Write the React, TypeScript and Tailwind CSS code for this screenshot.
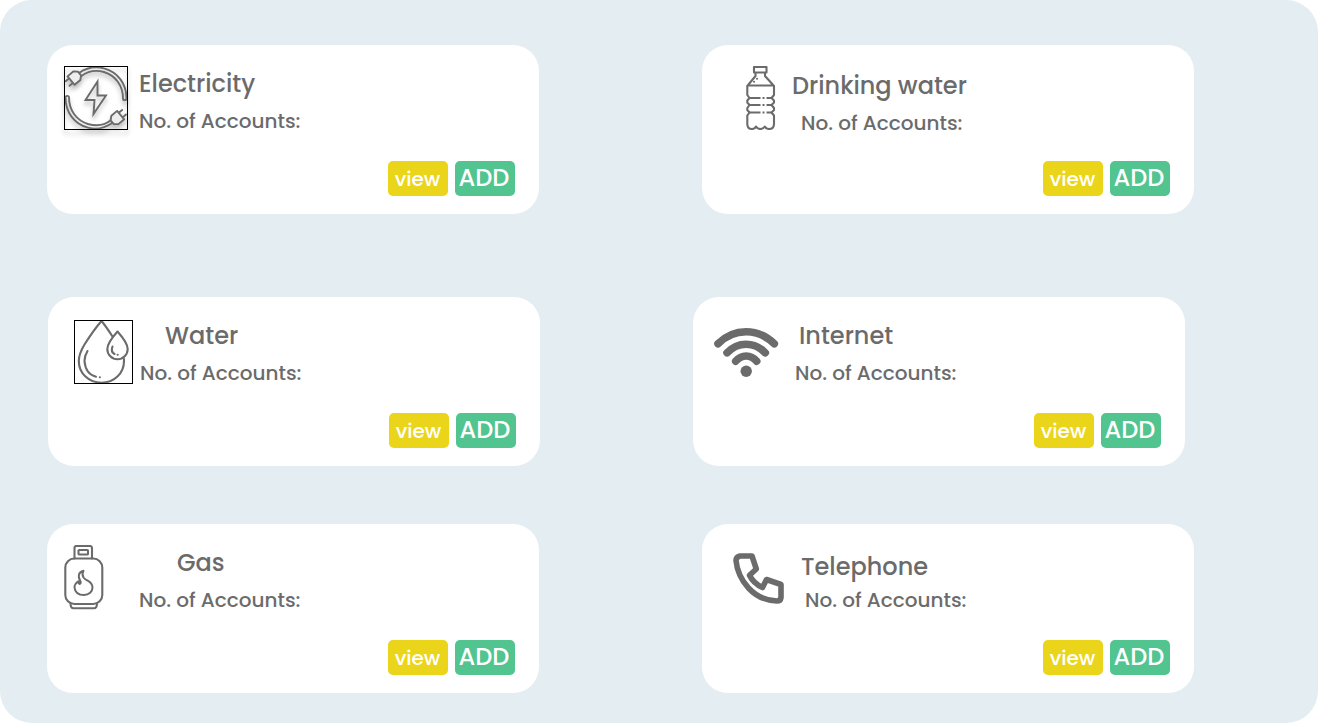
import type { ReactNode } from "react";

type Service = {
  title: string;
  icon: ReactNode;
  iconBox: string;
  text: string;
  titleClass: string;
  accountsClass: string;
};

const line = { fill: "none", stroke: "#6b6b6b", strokeLinecap: "round", strokeLinejoin: "round" } as const;

function Plug() {
  return (
    <path
      d="M-4.500 -5.500 L3 -5.500 L6.500 -2.500 V2.500 L3 5.500 L-4.500 5.500 Z M-4.500 -3 H-9 M-4.500 3 H-9"
      fill="#eeeeee"
    />
  );
}

function ElectricityIcon() {
  return (
    <svg
      viewBox="0 0 64 64"
      className="size-full outline-1 -outline-offset-1 outline-black drop-shadow-[0_4px_2px_rgba(0,0,0,0.25)]"
      {...line}
      strokeWidth="1.900"
    >
      <path d="M15 7 C22 2 31 0 40 2.300 C54 6 62.500 18 62.500 32.500 C62.500 34.700 59 34.700 59 32.500 C59 19 51 9.500 40 6 C32 3.800 24 5 17.500 10" />
      <path d="M49 56.500 C41 62 32 64 24 61.700 C10 58 1.500 46 1.500 31.500 C1.500 29.300 5 29.300 5 31.500 C5 45 13 54.500 24 58 C32 60.200 40 59.500 46.500 54.500" />
      <path d="M33.500 15.500 L21.500 34 H30.500 L29.500 48 L42 29.500 H33.500 Z" strokeLinejoin="miter" />
      <g transform="translate(10.500 11.700) rotate(-40)">
        <Plug />
      </g>
      <g transform="translate(53.200 52) rotate(140)">
        <Plug />
      </g>
    </svg>
  );
}

function BottleIcon() {
  return (
    <svg viewBox="0 0 30 64" className="size-full" {...line} strokeWidth="2.100">
      <path d="M8 1 H20.500 V6.500 H8 Z M9.500 6.500 V10 L1.300 20 V29 L3.500 32 L1.300 34.500 V36.500 L3.500 39 L1.300 42 V44 L3.500 46.500 L1.300 49.500 V58 Q1.300 63 6 63 Q9 63 10 60.500 Q11.500 63 14.300 63 Q17 63 18.800 60.500 Q20 63 23 63 Q28 63 28 58 V49.500 L25.500 46.500 L28 44 V42 L25.500 39 L28 36.500 V34.500 L25.500 32 L28 29 V20 L19 10 V6.500 M1.500 19.500 H27.500" />
      <path d="M3.500 32 H14.500 M16.500 32 H18.500 M20.500 32 H25.500 M3.500 39 H14.500 M16.500 39 H18.500 M20.500 39 H25.500 M3.500 46.500 H14.500 M16.500 46.500 H18.500 M20.500 46.500 H25.500" strokeLinecap="butt" />
      <path d="M8 15.700 H8.100 M11 12.700 H11.100" strokeWidth="2" />
    </svg>
  );
}

function WaterIcon() {
  return (
    <svg
      viewBox="0 0 59 64"
      className="size-full outline-1 -outline-offset-1 outline-black"
      {...line}
      strokeWidth="2.100"
    >
      <path d="M38.500 16.500 Q31 5 27.500 1 Q20 9.500 10.500 24.500 Q4.800 34 4.800 41 C4.800 53.500 15 62.800 27.500 62.800 C40 62.800 50 53.500 50 41 V39" />
      <path d="M43.500 11.500 Q33.300 23 33.300 29 A10.200 10.200 0 0 0 53.700 29 Q53.700 23 43.500 11.500 Z" />
      <path d="M13.500 31 Q10.500 36 10.500 41 Q11.500 54 22 56.800 M25.800 57.200 H25.900 M38.500 26.500 Q36.500 32 40.500 34 M43.600 34.700 H43.700" />
    </svg>
  );
}

function InternetIcon() {
  return (
    <svg viewBox="0 0 64 50" className="size-full overflow-visible" {...line} strokeWidth="7.600">
      <path d="M4 15.800 C20 -.200 44 -.200 60.300 15.800 M13 24.800 C24 13.300 40.300 13.300 51.300 24.800 M21.700 33.200 C27.500 26.200 36.800 26.200 42.700 33.200" />
      <circle cx="32.200" cy="43.300" r="5.700" fill="#6b6b6b" stroke="none" />
    </svg>
  );
}

function GasIcon() {
  return (
    <svg viewBox="0 0 40 65" className="size-full" {...line} strokeWidth="2.100">
      <path d="M10.500 13.500 V3 Q10.500 1 12.500 1 H26 Q28 1 28 3 V13.500" />
      <rect x="14.500" y="5" width="9.500" height="4.500" rx=".8" />
      <rect x="1.300" y="13.500" width="37" height="45.500" rx="9" />
      <path d="M6.500 58.500 Q6.500 63.200 9.500 63.200 H30 Q33 63.200 33 58.500" />
      <path d="M19.500 25.800 C14 27 14 32 16 35.200 Q17.500 38 15.800 39 Q14.500 38.500 14.300 36.300 Q10.500 39 10.500 42.500 C11 48 15 50 20 50 C25 49.800 28.500 46.500 28.500 42.500 C28.500 36 22.500 36.500 19.500 32.500 Q17.500 29 19.500 25.800 Z" strokeWidth="2" />
    </svg>
  );
}

function TelephoneIcon() {
  return (
    <svg viewBox="0 0 52 52" className="size-full" {...line} strokeWidth="5.600">
      <path d="M7 3 H19 L23.300 16 L16.500 22.300 Q20.500 30.500 29.500 34.500 L33.500 26.500 L48 31.500 V44.500 Q47.500 48 44 48 Q27 47.500 15.500 35 Q4.500 23 3 7.500 Q3 4 7 3 Z" />
    </svg>
  );
}

const rows: { className: string; services: Service[] }[] = [
  {
    className: "pl-[47px] gap-[163px]",
    services: [
      {
        title: "Electricity",
        icon: <ElectricityIcon />,
        iconBox: "ml-[17px] mt-[21px] h-16 w-16",
        text: "ml-[11px] pt-6",
        titleClass: "",
        accountsClass: "mt-[10px]",
      },
      {
        title: "Drinking water",
        icon: <BottleIcon />,
        iconBox: "ml-11 mt-[21px] h-16 w-[30px]",
        text: "ml-4 pt-[26px]",
        titleClass: "",
        accountsClass: "mt-[10px] ml-[9px]",
      },
    ],
  },
  {
    className: "mt-[83px] pl-12 gap-[153px]",
    services: [
      {
        title: "Water",
        icon: <WaterIcon />,
        iconBox: "ml-[26px] mt-[23px] h-16 w-[59px]",
        text: "ml-[7px] pt-6",
        titleClass: "ml-[25px]",
        accountsClass: "mt-[10px]",
      },
      {
        title: "Internet",
        icon: <InternetIcon />,
        iconBox: "ml-[21px] mt-[31px] h-[50px] w-16",
        text: "ml-[17px] pt-6",
        titleClass: "ml-1",
        accountsClass: "mt-[10px]",
      },
    ],
  },
  {
    className: "mt-[58px] pl-[47px] gap-[163px]",
    services: [
      {
        title: "Gas",
        icon: <GasIcon />,
        iconBox: "ml-[17px] mt-[21px] h-[65px] w-10",
        text: "ml-[35px] pt-6",
        titleClass: "ml-[38px]",
        accountsClass: "mt-[10px]",
      },
      {
        title: "Telephone",
        icon: <TelephoneIcon />,
        iconBox: "ml-[31px] mt-[29px] h-[52px] w-[52px]",
        text: "ml-4 pt-7",
        titleClass: "",
        accountsClass: "mt-[6px] ml-1",
      },
    ],
  },
];

function ServiceCard({ service }: { service: Service }) {
  return (
    <section className="flex h-[169px] w-[492px] shrink-0 flex-col justify-between rounded-[26px] bg-white">
      <div className="flex items-start">
        <div className={`shrink-0 ${service.iconBox}`}>{service.icon}</div>
        <div className={`flex flex-col items-start whitespace-nowrap font-medium text-[#6b6b6b] ${service.text}`}>
          <h2 className={`text-[24px] leading-[30px] ${service.titleClass}`}>{service.title}</h2>
          <p className={`text-[20px] leading-[24px] ${service.accountsClass}`}>No. of Accounts:</p>
        </div>
      </div>
      <div className="flex justify-end gap-[7px] pr-6 pb-[18px] font-medium text-white">
        <button className="h-[35px] w-[60px] rounded-[5px] bg-[#ead51a] pt-px pr-px text-[20px] leading-[34px]">view</button>
        <button className="h-[35px] w-[60px] rounded-[5px] bg-[#52c48f] pr-[2px] pb-[2px] text-[24px] leading-[33px]">ADD</button>
      </div>
    </section>
  );
}

export default function App() {
  return (
    <main className="h-[723px] w-[1318px] overflow-hidden rounded-[32px] bg-[#e4edf2] pt-[45px] font-[Poppins,Inter,sans-serif]">
      {rows.map((row, index) => (
        <div key={index} className={`flex ${row.className}`}>
          {row.services.map((service) => (
            <ServiceCard key={service.title} service={service} />
          ))}
        </div>
      ))}
    </main>
  );
}
